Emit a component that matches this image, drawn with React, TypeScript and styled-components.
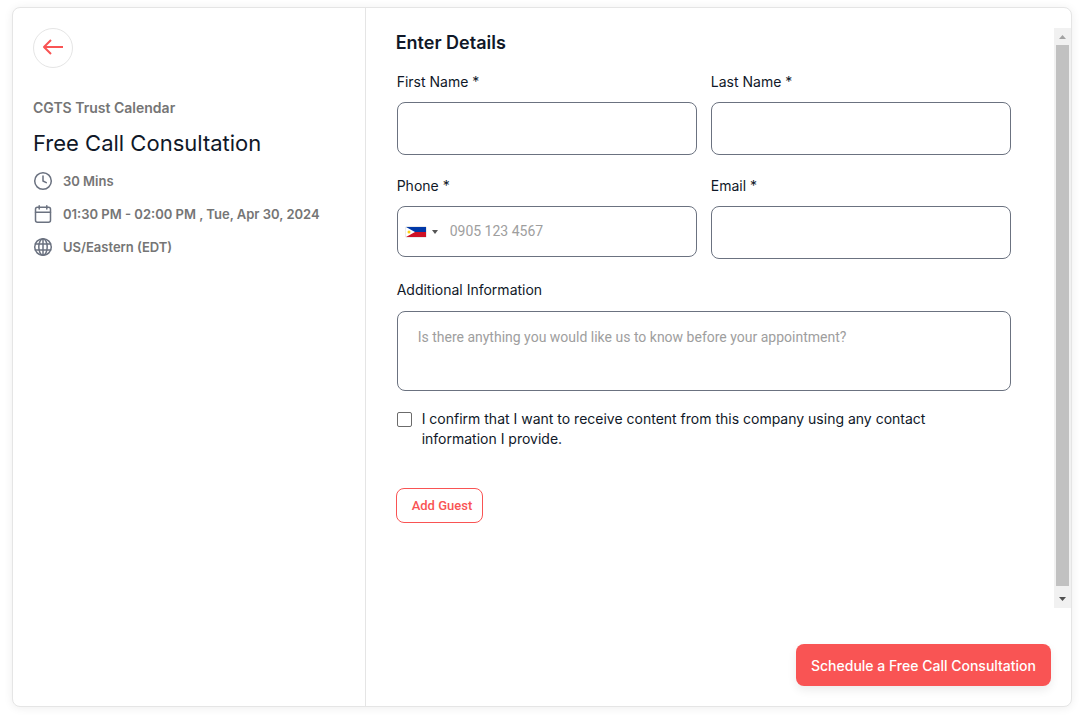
import React from "react";
import styled, { createGlobalStyle } from "styled-components";

const accent = "#f95454";

const GlobalStyle = createGlobalStyle`
  *, *::before, *::after { box-sizing: border-box; }
  body {
    margin: 0;
    background: #fff;
    color: #101828;
    font-family: Inter, "Liberation Sans", sans-serif;
    font-size: 14px;
    line-height: 20px;
  }
  button, input, textarea { font: inherit; }
`;

const Page = styled.div`
  display: flex;
  min-height: 100vh;
  padding: 7px 13px 14px 12px;
`;

const Card = styled.main`
  display: grid;
  grid-template-columns: minmax(0, 1fr) minmax(0, 2fr);
  flex: 1;
  min-width: 0;
  border: 1px solid #e5e5e5;
  border-radius: 8px;
  box-shadow: 0 1px 10px rgba(0, 0, 0, 0.07);
  background: #fff;
`;

const Summary = styled.aside`
  padding: 20px;
  border-right: 1px solid #e5e5e5;
`;

const BackButton = styled.button`
  display: flex;
  align-items: center;
  justify-content: center;
  width: 40px;
  height: 40px;
  padding: 0 0 2px;
  border: 1px solid #e5e5e5;
  border-radius: 50%;
  background: #fff;
  color: ${accent};
  cursor: pointer;
`;

const CalendarName = styled.p`
  margin: 30px 0 0;
  color: #757575;
  font-weight: 600;
`;

const Title = styled.h1`
  margin: 10px 0 0;
  color: #101828;
  font-size: 22px;
  font-weight: 400;
  line-height: 30px;
`;

const Facts = styled.ul`
  display: flex;
  flex-direction: column;
  gap: 13px;
  margin: 13px 0 0;
  padding: 0;
  list-style: none;
`;

const Fact = styled.li`
  display: flex;
  align-items: center;
  gap: 10px;
  color: #757575;
  font-size: 13px;
  font-weight: 600;
  line-height: 20px;
`;

const FactIcon = styled.svg`
  flex: none;
  width: 20px;
  height: 20px;
  fill: none;
  stroke: #6b7280;
  stroke-linecap: round;
  stroke-linejoin: round;
`;

const Details = styled.form`
  display: flex;
  flex-direction: column;
  min-width: 0;
  padding-top: 20px;
`;

const ScrollArea = styled.div`
  display: flex;
  flex: 1;
`;

const Content = styled.div`
  flex: 1;
  min-width: 0;
  padding: 0 42px 40px 30px;
`;

const Heading = styled.h2`
  margin: 0 0 14px;
  font-size: 18px;
  font-weight: 600;
  line-height: 30px;
`;

const Fields = styled.div`
  display: grid;
  grid-template-columns: 1fr 1fr;
  align-items: start;
  gap: 21px 14px;
  padding: 0 1px;
`;

const Field = styled.div<{ $wide?: boolean }>`
  display: flex;
  flex-direction: column;
  gap: ${(p) => (p.$wide ? "11px" : "10px")};
  min-width: 0;
  grid-column: ${(p) => (p.$wide ? "1 / -1" : "auto")};
`;

const TextInput = styled.input`
  width: 100%;
  height: 53px;
  padding: 0 20px;
  border: 1px solid #6b7280;
  border-radius: 8px;
  background: #fff;
`;

const PhoneBox = styled.div`
  display: flex;
  align-items: center;
  height: 51px;
  border: 1px solid #6b7280;
  border-radius: 8px;
`;

const CountryButton = styled.button`
  display: flex;
  align-items: center;
  gap: 6px;
  height: 100%;
  padding: 0 8px;
  border: 0;
  background: none;
`;

const Flag = styled.svg`
  width: 20px;
  height: 10px;
  box-shadow: 0 0 1px #888;
`;

const PhoneInput = styled.input`
  flex: 1;
  min-width: 0;
  padding: 0 4px 2px;
  border: 0;
  background: none;
  font-family: Roboto, sans-serif;
  &::placeholder { color: #9e9e9e; }
`;

const Notes = styled.textarea`
  display: block;
  width: 100%;
  height: 80px;
  padding: 15px 20px;
  border: 1px solid #6b7280;
  border-radius: 8px;
  resize: none;
  font-family: Roboto, sans-serif;
  &::placeholder { color: #9e9e9e; }
`;

const Consent = styled.label`
  display: flex;
  gap: 10px;
  margin-top: 18px;
  padding: 0 40px 0 1px;
`;

const Checkbox = styled.input`
  flex: none;
  appearance: none;
  width: 15px;
  height: 15px;
  margin: 3px 0 0;
  border: 1px solid #6b6b6b;
  border-radius: 2px;
  background: #fff;
  &:checked { background: ${accent}; }
`;

const GuestButton = styled.button`
  height: 35px;
  margin-top: 39px;
  padding: 0 10px 0 15px;
  border: 1px solid ${accent};
  border-radius: 8px;
  background: #fff;
  color: ${accent};
  font-family: Roboto, sans-serif;
  font-size: 13px;
  font-weight: 500;
`;

const ScrollTrack = styled.div`
  display: flex;
  flex-direction: column;
  align-items: center;
  width: 17px;
  background: #f1f1f1;
`;

const ScrollArrow = styled.svg`
  width: 17px;
  height: 17px;
`;

const ScrollThumb = styled.div`
  flex: 1;
  width: 13px;
  margin-bottom: 5px;
  background: #c1c1c1;
`;

const Footer = styled.footer`
  display: flex;
  justify-content: flex-end;
  padding: 36px 20px 20px;
`;

const SubmitButton = styled.button`
  height: 42px;
  padding: 2px 15px 0;
  border: 0;
  border-radius: 8px;
  background: ${accent};
  box-shadow: 0 4px 10px rgba(0, 0, 0, 0.08);
  color: #fff;
  font-weight: 500;
`;

export default function App() {
  return (
    <>
      <GlobalStyle />
      <Page>
        <Card>
          <Summary>
            <BackButton type="button" aria-label="Back">
              <svg
                width="22"
                height="18"
                viewBox="0 0 22 18"
                fill="none"
                stroke="currentColor"
                strokeWidth="2"
                strokeLinejoin="round"
              >
                <path d="M21 9H2.500M9 2L2 9l7 7" />
              </svg>
            </BackButton>
            <CalendarName>CGTS Trust Calendar</CalendarName>
            <Title>Free Call Consultation</Title>
            <Facts>
              <Fact>
                <FactIcon viewBox="0 0 20 20" strokeWidth="1.5" aria-hidden="true">
                  <circle cx="10" cy="10" r="8.3" />
                  <path d="M10 5v5l3.3 1.7" />
                </FactIcon>
                30 Mins
              </Fact>
              <Fact>
                <FactIcon viewBox="0 0 20 20" strokeWidth="1.5" aria-hidden="true">
                  <rect x="2.5" y="3.3" width="15" height="15" rx="2" />
                  <path d="M6.2 1.7v3.3M13.8 1.7v3.3M2.5 8.3h15" />
                </FactIcon>
                01:30 PM - 02:00 PM , Tue, Apr 30, 2024
              </Fact>
              <Fact>
                <FactIcon viewBox="0 0 20 20" strokeWidth="1.5" aria-hidden="true">
                  <circle cx="10" cy="10" r="8.3" />
                  <ellipse cx="10" cy="10" rx="4.2" ry="8.3" />
                  <path d="M10 1.7v16.6M2.3 7h15.4M2.3 13h15.4" />
                </FactIcon>
                US/Eastern (EDT)
              </Fact>
            </Facts>
          </Summary>
          <Details>
            <ScrollArea>
              <Content>
                <Heading>Enter Details</Heading>
                <Fields>
                  <Field>
                    <label htmlFor="first-name">First Name *</label>
                    <TextInput id="first-name" type="text" />
                  </Field>
                  <Field>
                    <label htmlFor="last-name">Last Name *</label>
                    <TextInput id="last-name" type="text" />
                  </Field>
                  <Field>
                    <label htmlFor="phone">Phone *</label>
                    <PhoneBox>
                      <CountryButton type="button" aria-label="Country: Philippines">
                        <Flag viewBox="0 0 20 10" aria-hidden="true">
                          <rect width="20" height="5" fill="#0038a8" />
                          <rect y="5" width="20" height="5" fill="#ce1126" />
                          <path d="M0 0l9 5-9 5z" fill="#fff" />
                          <circle cx="3" cy="5" r="1.5" fill="#fcd116" />
                        </Flag>
                        <svg width="6" height="4" viewBox="0 0 6 4" aria-hidden="true">
                          <path d="M0 0h6L3 4z" fill="#555" />
                        </svg>
                      </CountryButton>
                      <PhoneInput id="phone" type="tel" placeholder="0905 123 4567" />
                    </PhoneBox>
                  </Field>
                  <Field>
                    <label htmlFor="email">Email *</label>
                    <TextInput id="email" type="email" />
                  </Field>
                  <Field $wide>
                    <label htmlFor="notes">Additional Information</label>
                    <Notes
                      id="notes"
                      placeholder="Is there anything you would like us to know before your appointment?"
                    />
                  </Field>
                </Fields>
                <Consent>
                  <Checkbox type="checkbox" />
                  <span>
                    I confirm that I want to receive content from this company using any contact
                    information I provide.
                  </span>
                </Consent>
                <GuestButton type="button">Add Guest</GuestButton>
              </Content>
              <ScrollTrack aria-hidden="true">
                <ScrollArrow viewBox="0 0 17 17">
                  <path d="M5 11h7L8.500 7z" fill="#a3a3a3" />
                </ScrollArrow>
                <ScrollThumb />
                <ScrollArrow viewBox="0 0 17 17">
                  <path d="M5 6h7L8.500 10z" fill="#505050" />
                </ScrollArrow>
              </ScrollTrack>
            </ScrollArea>
            <Footer>
              <SubmitButton type="submit">Schedule a Free Call Consultation</SubmitButton>
            </Footer>
          </Details>
        </Card>
      </Page>
    </>
  );
}
